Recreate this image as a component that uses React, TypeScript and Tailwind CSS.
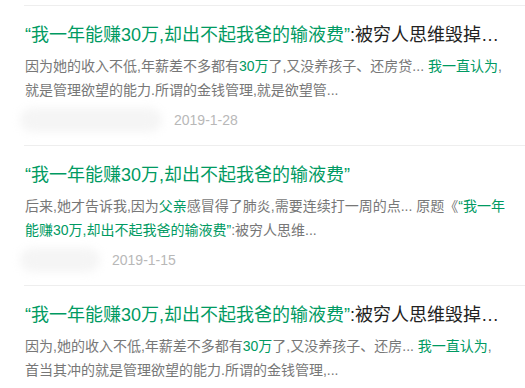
const G = ({ children }: { children: React.ReactNode }) => (
  <span className="text-[#009a62]">{children}</span>
);

interface Result {
  title: React.ReactNode;
  lines: React.ReactNode[];
  date?: string;
  blurWidth?: number;
}

const results: Result[] = [
  {
    title: (
      <>
        <G>“我一年能赚30万,却出不起我爸的输液费”</G>:被穷人思维毁掉…
      </>
    ),
    lines: [
      <>
        因为她的收入不低,年薪差不多都有<G>30万</G>了,又没养孩子、还房贷... <G>我一直认为</G>,
      </>,
      <>就是管理欲望的能力.所谓的金钱管理,就是欲望管...</>,
    ],
    date: "2019-1-28",
    blurWidth: 142,
  },
  {
    title: <G>“我一年能赚30万,却出不起我爸的输液费”</G>,
    lines: [
      <>
        后来,她才告诉我,因为<G>父亲</G>感冒得了肺炎,需要连续打一周的点... 原题《<G>“我一年</G>
      </>,
      <>
        <G>能赚30万,却出不起我爸的输液费”</G>:被穷人思维...
      </>,
    ],
    date: "2019-1-15",
    blurWidth: 80,
  },
  {
    title: (
      <>
        <G>“我一年能赚30万,却出不起我爸的输液费”</G>:被穷人思维毁掉…
      </>
    ),
    lines: [
      <>
        因为,她的收入不低,年薪差不多都有<G>30万</G>了,又没养孩子、还房... <G>我一直认为</G>,
      </>,
      <>首当其冲的就是管理欲望的能力.所谓的金钱管理,...</>,
    ],
  },
];

function ResultItem({ item }: { item: Result }) {
  return (
    <div className="border-t border-[#eeeeee] pt-[16px] pb-[15px] pl-[1px]">
      <div className="whitespace-nowrap text-[18px] leading-[26px] text-[#222222]">
        {item.title}
      </div>
      <div className="mt-[6px] text-[14px] leading-[24px] text-[#777777]">
        {item.lines.map((line, i) => (
          <div key={i} className="whitespace-nowrap">
            {line}
          </div>
        ))}
      </div>
      {item.date && (
        <div className="mt-[8px] flex h-[20px] items-center">
          <div
            className="ml-[-5px] h-[24px] rounded-full bg-[#f5f5f5] blur-[4px]"
            style={{ width: item.blurWidth }}
          />
          <span className="ml-[12px] font-['Liberation_Sans',sans-serif] text-[14px] text-[#b8b8b8]">
            {item.date}
          </span>
        </div>
      )}
    </div>
  );
}

export default function App() {
  return (
    <div className="h-[388px] w-[525px] overflow-hidden bg-white pl-[24px] pt-[5px] font-['Liberation_Sans','Noto_Sans_CJK_SC',sans-serif]">
      {results.map((item, i) => (
        <ResultItem key={i} item={item} />
      ))}
    </div>
  );
}
